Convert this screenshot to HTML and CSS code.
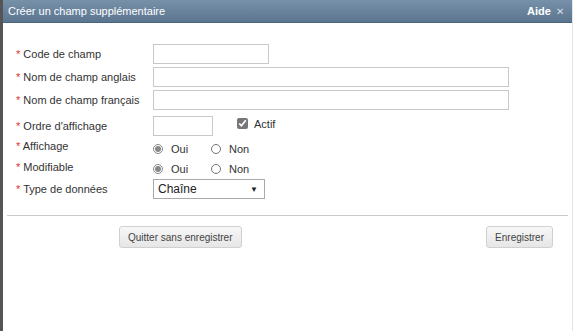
FILE: index.html
```html
<!DOCTYPE html>
<html lang="fr">
<head>
  <meta charset="UTF-8" />
  <title>Créer un champ supplémentaire</title>
  <link rel="stylesheet" href="styles.css">
</head>
<body>
  <div class="dialog">
    <div class="title-bar">
      <span class="title">Créer un champ supplémentaire</span>
      <span class="help">Aide <span class="close">&#x2715;</span></span>
    </div>

    <div class="content">
      <div class="form">
        <div class="row r-code">
          <label><span class="req">*</span> Code de champ</label>
          <input type="text" class="in-code">
        </div>
        <div class="row r-text">
          <label><span class="req">*</span> Nom de champ anglais</label>
          <input type="text" class="in-wide">
        </div>
        <div class="row r-text">
          <label><span class="req">*</span> Nom de champ français</label>
          <input type="text" class="in-wide">
        </div>
        <div class="row r-order">
          <label><span class="req">*</span> Ordre d'affichage</label>
          <div class="field">
            <input type="text" class="in-order">
            <label class="check"><input type="checkbox" checked> Actif</label>
          </div>
        </div>
        <div class="row r-radio">
          <label><span class="req">*</span> Affichage</label>
          <div class="field radios">
            <label class="opt"><input type="radio" name="aff" checked> Oui</label>
            <label class="opt"><input type="radio" name="aff"> Non</label>
          </div>
        </div>
        <div class="row r-radio r-mod">
          <label><span class="req">*</span> Modifiable</label>
          <div class="field radios">
            <label class="opt"><input type="radio" name="mod" checked> Oui</label>
            <label class="opt"><input type="radio" name="mod"> Non</label>
          </div>
        </div>
        <div class="row r-select">
          <label><span class="req">*</span> Type de données</label>
          <div class="select">Chaîne <span class="arrow">&#9660;</span></div>
        </div>
      </div>

      <hr class="sep">

      <div class="actions">
        <button class="btn">Quitter sans enregistrer</button>
        <button class="btn">Enregistrer</button>
      </div>
    </div>
  </div>
</body>
</html>
```

FILE: styles.css
```css
body {
  margin: 0;
  font-family: 'Liberation Sans', Arial, sans-serif;
  font-size: 11px;
  color: #333;
  background: #fff;
}

.dialog {
  height: 331px;
  border-left: 3px solid #555;
  border-right: 1px solid #e4e4e4;
  box-sizing: border-box;
  background: #fff;
}

.title-bar {
  height: 22px;
  display: flex;
  justify-content: space-between;
  align-items: center;
  padding: 0 8px 0 5px;
  background: linear-gradient(#7791a9, #5b7590);
  border-bottom: 1px solid #4b637b;
  color: #fff;
  font-size: 11px;
}

.help {
  font-weight: bold;
}

.close {
  font-weight: normal;
  color: #d8dee5;
  font-size: 10px;
  margin-left: 2px;
}

.content {
  padding: 21px 4px 0 4px;
}

.form {
  padding-left: 9px;
}

.row {
  display: grid;
  grid-template-columns: 137px auto;
  align-items: center;
}

.req {
  color: #d33;
}

.r-code { height: 20px; margin-bottom: 3px; }
.r-text { height: 20px; margin-bottom: 3px; }
.r-order { height: 20px; margin-top: 6px; }
.r-radio { height: 20px; }
.r-mod { height: 21px; }
.r-select { height: 20px; margin-top: 2px; }

input[type=text] {
  height: 20px;
  box-sizing: border-box;
  border: 1px solid #c8c8c8;
  margin: 0;
  padding: 0;
}

.in-code { width: 116px; }
.in-wide { width: 356px; }
.in-order { width: 60px; }

.field {
  display: flex;
  align-items: center;
}

.check {
  display: flex;
  align-items: center;
  margin-left: 24px;
  margin-top: -5px;
}

.check input {
  width: 11px;
  height: 11px;
  margin: 0 6px 0 0;
  accent-color: #777;
}

.opt {
  display: flex;
  align-items: center;
  width: 58px;
  margin-top: 5px;
}

.opt input {
  width: 10px;
  height: 10px;
  margin: 0 8px 0 0;
  accent-color: #888;
}

.select {
  width: 112px;
  height: 20px;
  box-sizing: border-box;
  border: 1px solid #aaa;
  display: flex;
  align-items: center;
  justify-content: space-between;
  padding: 0 6px 0 4px;
  color: #222;
  font-size: 12px;
}

.arrow {
  font-size: 8px;
}

.sep {
  border: 0;
  border-top: 1px solid #c9c9c9;
  margin: 16px 0 0 0;
}

.actions {
  display: flex;
  justify-content: space-between;
  padding: 10px 15px 0 112px;
}

.btn {
  height: 22px;
  padding: 0 8px;
  font-family: 'Liberation Sans', Arial, sans-serif;
  font-size: 10px;
  color: #444;
  background: linear-gradient(#f7f7f7, #e6e6e6);
  border: 1px solid #d0d0d0;
  border-radius: 3px;
}
```
